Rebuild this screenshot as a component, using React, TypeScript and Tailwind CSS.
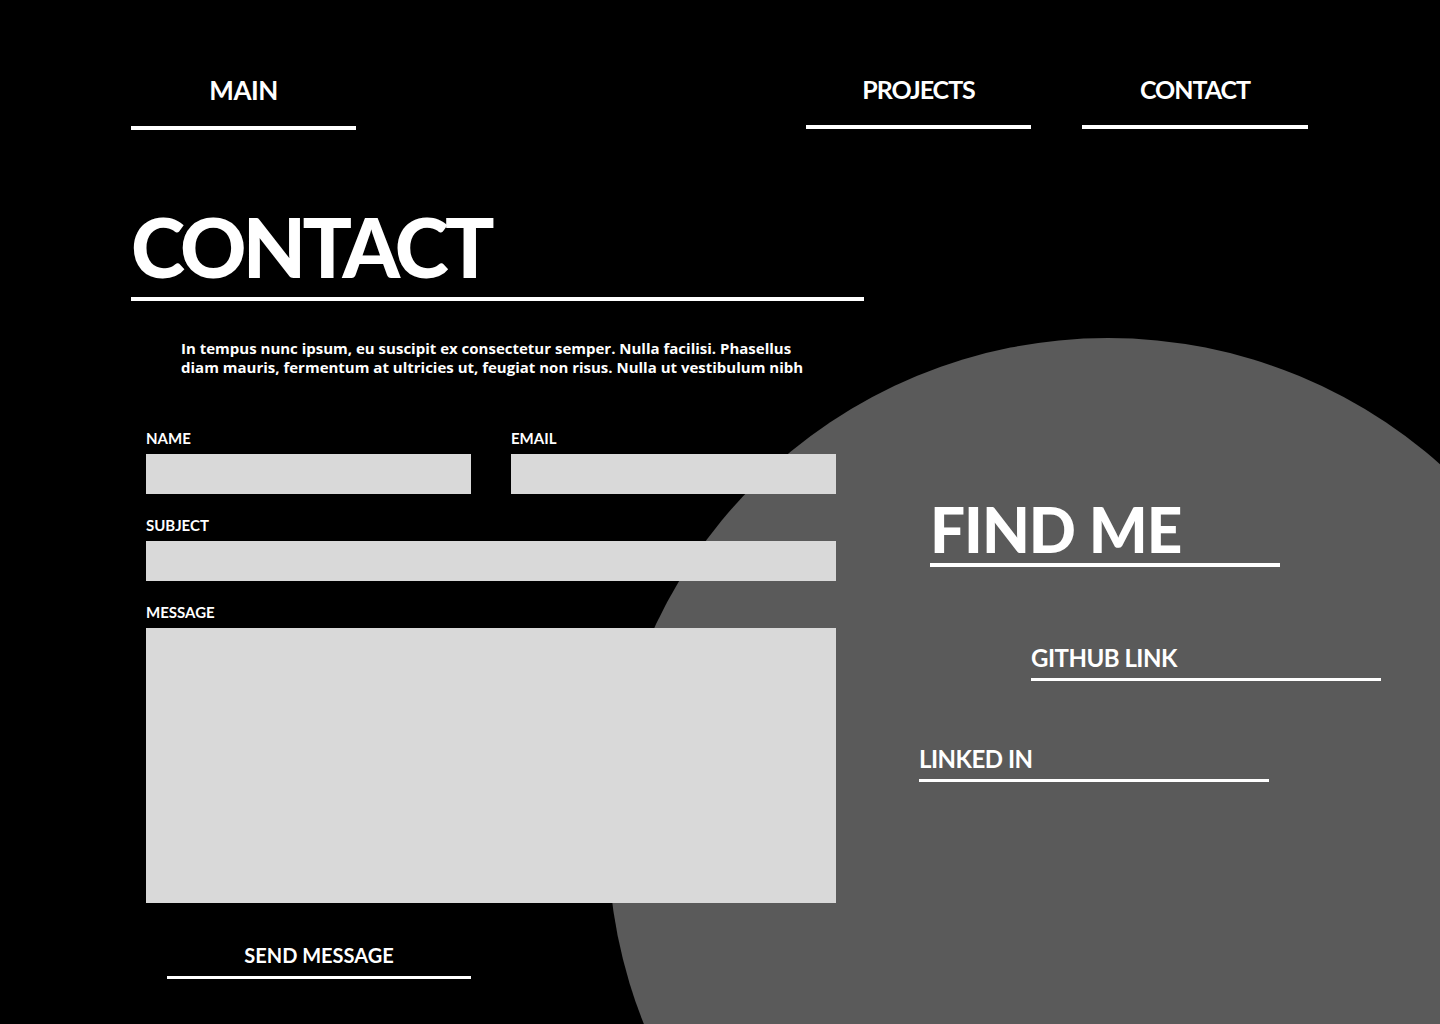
export default function App() {
  const font = { fontFamily: "Lato, 'Open Sans', sans-serif" };
  return (
    <div
      className="relative w-[1440px] h-[1024px] overflow-hidden bg-black text-white"
      style={font}
    >
      {/* big grey circle behind the find me block */}
      <div className="absolute left-[608px] top-[338px] w-[1000px] h-[1000px] rounded-full bg-[#5a5a5a]" />

      <div className="relative">
        {/* nav */}
        <nav className="flex pt-[77px] pl-[131px]">
          <div className="w-[225px] flex flex-col items-center">
            <span className="text-[26px] leading-none font-bold tracking-[-0.5px]">MAIN</span>
            <div className="mt-[23px] w-full h-1 bg-white" />
          </div>
          <div className="ml-[450px] w-[225px] flex flex-col items-center">
            <span className="text-[25px] leading-none font-bold tracking-[-1px]">PROJECTS</span>
            <div className="mt-[23px] w-full h-1 bg-white" />
          </div>
          <div className="ml-[51px] w-[226px] flex flex-col items-center">
            <span className="text-[25px] leading-none font-bold tracking-[-1px]">CONTACT</span>
            <div className="mt-[23px] w-full h-1 bg-white" />
          </div>
        </nav>

        <div className="flex pl-[131px]">
          {/* left: contact form */}
          <div className="w-[733px]">
            <h1 className="mt-[75px] text-[82px] leading-none font-black tracking-[-0.045em]">
              CONTACT
            </h1>
            <div className="mt-[10px] h-1 bg-white" />
            <p
              className="mt-[38px] ml-[50px] whitespace-nowrap text-[15px] leading-[19px] font-bold"
              style={{ fontFamily: "'Open Sans', Lato, sans-serif" }}
            >
              In tempus nunc ipsum, eu suscipit ex consectetur semper. Nulla facilisi. Phasellus
              <br />
              diam mauris, fermentum at ultricies ut, feugiat non risus. Nulla ut vestibulum nibh
            </p>

            <form className="mt-[53px] ml-[15px] w-[690px]">
              <div className="flex gap-[40px]">
                <label className="flex-1 flex flex-col">
                  <span className="text-[15px] leading-4 font-bold">NAME</span>
                  <input className="mt-2 h-10 bg-[#d9d9d9] outline-none" />
                </label>
                <label className="flex-1 flex flex-col">
                  <span className="text-[15px] leading-4 font-bold">EMAIL</span>
                  <input className="mt-2 h-10 bg-[#d9d9d9] outline-none" />
                </label>
              </div>
              <label className="mt-[23px] flex flex-col">
                <span className="text-[15px] leading-4 font-bold">SUBJECT</span>
                <input className="mt-2 h-10 bg-[#d9d9d9] outline-none" />
              </label>
              <label className="mt-[23px] flex flex-col">
                <span className="text-[15px] leading-4 font-bold">MESSAGE</span>
                <textarea className="mt-2 h-[275px] bg-[#d9d9d9] outline-none resize-none" />
              </label>
              <button
                type="button"
                className="mt-[42px] ml-[21px] w-[304px] flex flex-col items-center"
              >
                <span className="text-[20px] leading-none font-bold">SEND MESSAGE</span>
                <span className="mt-[11px] w-full h-[3px] bg-white" />
              </button>
            </form>
          </div>

          {/* right: find me */}
          <div className="ml-[55px] pt-[368px] flex flex-col">
            <div className="ml-[11px] w-[350px]">
              <h2 className="text-[62px] leading-none font-black tracking-[-1px]">FIND ME</h2>
              <div className="mt-[3px] h-1 bg-white" />
            </div>
            <div className="mt-[79px] ml-[112px] w-[350px]">
              <span className="block text-[24px] leading-none font-bold tracking-[-0.5px]">
                GITHUB LINK
              </span>
              <div className="mt-[8px] h-[3px] bg-white" />
            </div>
            <div className="mt-[66px] w-[350px]">
              <span className="block text-[24px] leading-none font-bold tracking-[-0.5px]">
                LINKED IN
              </span>
              <div className="mt-[8px] h-[3px] bg-white" />
            </div>
          </div>
        </div>
      </div>
    </div>
  );
}
